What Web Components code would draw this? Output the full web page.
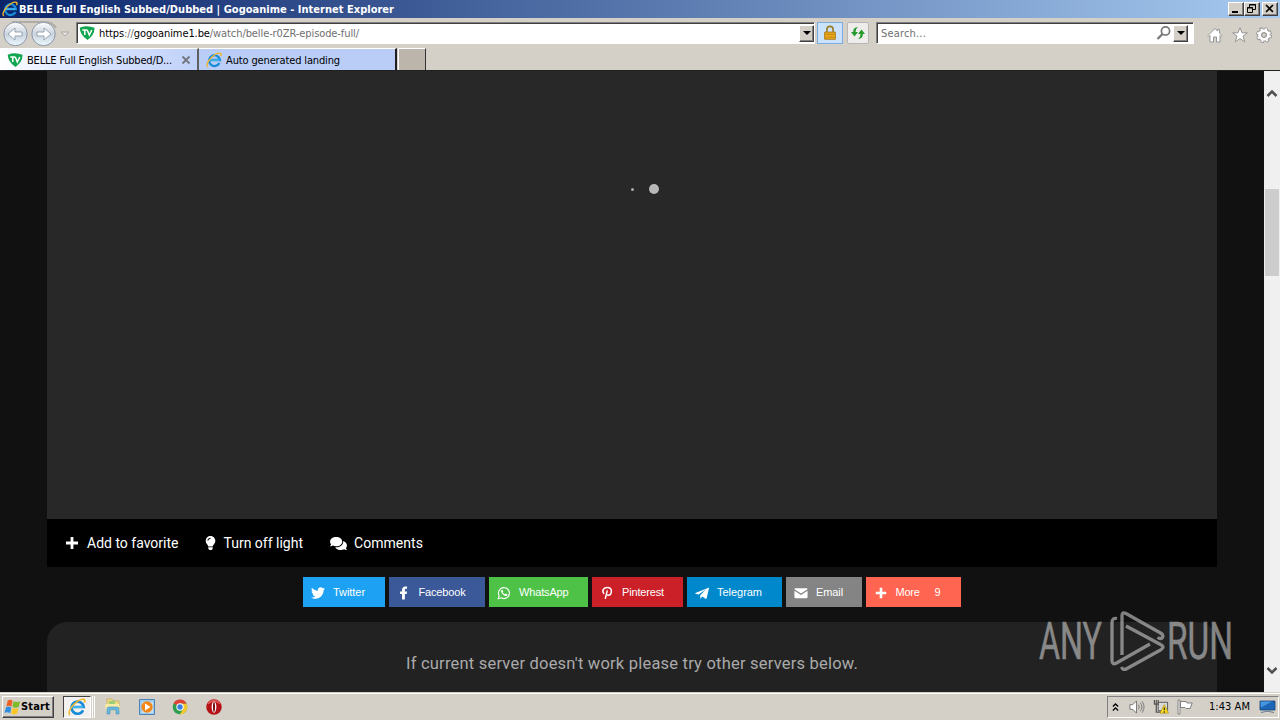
<!DOCTYPE html>
<html lang="en">
<head>
<meta charset="utf-8">
<title>BELLE Full English Subbed/Dubbed | Gogoanime</title>
<style>
	html, body {
		margin: 0;
		height: 720px;
		overflow: hidden;
	}
	body {
		display: flex;
		flex-direction: column;
		font: 11px/14px "DejaVu Sans Condensed", "DejaVu Sans", sans-serif;
		font-stretch: condensed;
		background: #d4d0c8;
		color: #000;
	}
</style>
</head>
<body>
<title-bar><fit-text w="375">BELLE Full English Subbed/Dubbed | Gogoanime - Internet Explorer</fit-text></title-bar>
<nav-bar></nav-bar>
<tab-strip>
	<browser-tab active icon="tv"><fit-text w="145">BELLE Full English Subbed/D...</fit-text></browser-tab>
	<browser-tab icon="ie"><fit-text w="114">Auto generated landing</fit-text></browser-tab>
</tab-strip>
<page-view>
	<video-player></video-player>
	<action-bar>
		<action-item icon="plus" style="width:140px"><fit-text w="91.500">Add to favorite</fit-text></action-item>
		<action-item icon="bulb" style="width:125px"><fit-text w="79.500">Turn off light</fit-text></action-item>
		<action-item icon="comments"><fit-text w="69">Comments</fit-text></action-item>
	</action-bar>
	<share-list>
		<share-button icon="twitter" style="width:82px;background:#1da1f2"><fit-text w="32">Twitter</fit-text></share-button>
		<share-button icon="facebook" style="width:96px;background:#3b5998"><fit-text w="47">Facebook</fit-text></share-button>
		<share-button icon="whatsapp" style="width:99px;background:#4dc247"><fit-text w="49.500">WhatsApp</fit-text></share-button>
		<share-button icon="pinterest" style="width:91px;background:#cb2027"><fit-text w="42">Pinterest</fit-text></share-button>
		<share-button icon="telegram" style="width:95px;background:#0088cc"><fit-text w="45">Telegram</fit-text></share-button>
		<share-button icon="mail" style="width:76px;background:#848484"><fit-text w="27">Email</fit-text></share-button>
		<share-button icon="more" style="width:95px;background:#ff6550"><fit-text w="24">More</fit-text><span slot="count">9</span></share-button>
	</share-list>
	<server-panel><fit-text w="452">If current server doesn't work please try other servers below.</fit-text></server-panel>
</page-view>
<task-bar><fit-text w="41">1:43 AM</fit-text></task-bar>
<water-mark></water-mark>

<script>
const icons = {
	ie: ['0 0 16 16', `<path d="M13.400 11A5.400 5.400 0 1 1 13.900 8H4.200" fill="none" stroke="#168bd8" stroke-width="2.300"/><path d="M4 8.100h9.500" stroke="#42b4ef" stroke-width="1.700"/><path d="M1.800 15C-.9 12.500 4 5.800 9 2.500c4-2.300 7.400-1.700 5.500 1.700" fill="none" stroke="#f0b62c" stroke-width="1.400"/>`],
	tv: ['0 0 16 16', `<path d="M.7 2.700Q8-.2 15.500 2.800Q15.800 10 8.500 15Q1 10 .7 2.700Z" fill="#13a650"/><path d="M3.300 5h5M5.800 5v5M8.300 5l2 5 2.500-5" fill="none" stroke="#fff" stroke-width="1.500"/>`],
	plus: ['0 0 14 14', '<path d="M7 1v12M1 7h12" stroke="#fff" stroke-width="2.800"/>'],
	bulb: ['0 0 352 512', '<path fill="#fff" d="M96 454.300c0 6.300 1.900 12.500 5.400 17.700l17.100 25.700A32 32 0 0 0 145 512h62a32 32 0 0 0 26.600-14.300l17-25.700a32 32 0 0 0 5.400-17.700V415H96v39.300ZM0 176c0 44.400 16.500 84.900 43.600 115.800 16.500 18.900 42.400 58.200 52.200 91.500h160.400c9.800-33.300 35.700-72.600 52.200-91.500A176 176 0 1 0 0 176Zm176-80c-44.100 0-80 35.900-80 80H64c0-61.800 50.200-112 112-112v32Z"/>'],
	comments: ['0 0 576 512', '<path fill="#fff" d="M416 192c0-88.400-93.100-160-208-160S0 103.600 0 192c0 34.300 14.100 65.900 38 92-13.400 30.200-35.500 54.200-35.800 54.500A8 8 0 0 0 8 352c36.600 0 66.900-12.300 88.700-25C129 343 167 352 208 352c114.900 0 208-71.600 208-160Zm122 220c23.900-26 38-57.700 38-92 0-66.900-53.500-124.200-129.300-148.100.9 6.600 1.300 13.300 1.300 20.100 0 105.900-107.700 192-240 192-10.800 0-21.300-.8-31.700-1.900C207.800 439.600 281.800 480 368 480c41 0 79-9.200 111.300-25 21.800 12.700 52.100 25 88.700 25a8 8 0 0 0 5.800-13.500c-.3-.3-22.400-24.200-35.800-54.500Z"/>'],
	twitter: ['0 0 512 512', '<path fill="#fff" d="M459 152c.3 4.500.3 9 .3 13.600C459.300 304 354 464 161 464 101 464 46 447 0 417c8 1 16 1.300 25 1.300 49 0 94-16.600 130-45-46-1-85-31-98-73 7 1 13 1.600 20 1.600 9 0 19-1.300 28-3.600C57 288 21 246 21 195v-1.300c14 8 30 13 47 13.600C40 189 21 157 21 120c0-20 5-37 14-53 52 64 130 105 217 110-2-8-3-16-3-24 0-58 47-105 105-105 30 0 58 13 77 33 24-5 46-13 67-25-8 24-24 45-46 58 21-2 41-8 60-16-14 21-32 39-53 54Z"/>'],
	facebook: ['0 0 32 32', '<path fill="#fff" d="M18 31h-6.500V18H7v-5.500h4.500V9C11.500 4 14.300 1 19 1c1.900 0 3.500.2 4 .3v5.200h-2.800C18.400 6.500 18 7.800 18 9.500v3h5l-.8 5.500H18v13Z"/>'],
	whatsapp: ['0 0 32 32', '<path d="m3 29 1.900-6.900A12.500 12.500 0 1 1 9.700 27L3 29Z" fill="none" stroke="#fff" stroke-width="2.600"/><path fill="#fff" d="M11.500 8.500c-1 .2-2.300 1.700-2.200 3.500.2 4 6.200 10.500 10.600 10.800 2.200.1 4-1.500 4-3.500 0-.5-3.200-2.200-4-2.300-.7 0-1.200 1.800-2 1.800-1.200 0-5-3.700-4.900-4.600.1-.6 1.400-1.300 1.300-2.100-.2-.8-1.500-3.500-2-3.600Z"/>'],
	pinterest: ['0 0 32 32', '<path d="M9.500 18C2.500 10 9 3.200 16.500 3.200c6.500 0 10 4 9.500 9-.5 6-4 9-7.500 8.800-2.200-.1-3.500-1.500-3.400-2.500M16.700 10 12 29.500" fill="none" stroke="#fff" stroke-width="3.400"/>'],
	telegram: ['0 0 32 32', '<path fill="#fff" d="M31 4 1 16c-1 .5-.8 1.400.2 1.700l7 2L25 8 12 21v8l5-5 7 5c1.300.8 2.300.2 2.600-1.200L32 5c.1-1-.3-1.300-1-1Z"/>'],
	mail: ['0 0 32 32', '<path fill="#fff" d="M3 5h26q2 0 2 2.500L16 17 1 7.500Q1 5 3 5Zm-2 6 15 9.500L31 11v14q0 3-3 3H4q-3 0-3-3Z"/>'],
	more: ['0 0 32 32', '<path d="M16 4v24M4 16h24" stroke="#fff" stroke-width="6"/>'],
	lock: ['0 0 16 18', '<path d="M4.500 8V5a3.500 3.500 0 0 1 7 0v3" fill="none" stroke="#9c7b25" stroke-width="1.800"/><path d="M2 8h12v8H2z" fill="#f0ac18" stroke="#a87310"/><path d="M3 10.500h10M3 13.500h10" stroke="#ba8116"/>'],
	refresh: ['0 0 16 16', '<path d="M1 7l3.500 4.500L8 7H5.500Q5.200 4 8 2 2.800 2.500 3.200 7Zm14 2L11.500 4.500 8 9h2.500q.3 3-2.500 5 5.200-.5 4.800-5Z" fill="#279b2d"/>'],
	search: ['0 0 16 16', '<circle cx="9.500" cy="6" r="4.100" fill="none" stroke="#777" stroke-width="1.700"/><path d="m6.500 9-5 5" stroke="#777" stroke-width="2.300"/>'],
	home: ['0 0 16 16', '<path d="M1 8.500 8 1.500l2.500 2.500V2.500h2V6L15 8.500l-1 1-1-1V15H9.500v-5h-3v5H3V8.500l-1 1Z" fill="#fff" stroke="#8c8c8c" stroke-width=".9"/>'],
	star: ['0 0 16 16', '<path d="m8 .8 2 5h5.300L11 9.200l1.700 5.600L8 11.500l-4.700 3.300L5 9.200.7 5.800H6Z" fill="#fff" stroke="#8c8c8c" stroke-width=".9"/>'],
	gear: ['0 0 16 16', '<circle cx="8" cy="8" r="6.400" fill="none" stroke="#8c8c8c" stroke-width="3" stroke-dasharray="2.900 2.127"/><circle cx="8" cy="8" r="4.300" fill="none" stroke="#8c8c8c" stroke-width="4.600"/><circle cx="8" cy="8" r="6.100" fill="none" stroke="#fff" stroke-width="2" stroke-dasharray="1.900 2.891" stroke-dashoffset="-.5"/><circle cx="8" cy="8" r="4.300" fill="none" stroke="#fff" stroke-width="3"/><circle cx="8" cy="8" r="2.300" fill="#d4d0c8" stroke="#8c8c8c" stroke-width=".8"/>'],
	close: ['0 0 10 10', '<path d="m1.500 1.500 7 7m0-7-7 7" stroke="#73777f" stroke-width="1.800"/>'],
	windows: ['0 0 18 16', '<path d="M4 1q3-1.500 5 .3L8 7.500Q5.500 6 2.500 7.200Z" fill="#ef6024"/><path d="M10 1.800q2.500 1.500 7 .2l-1.500 6Q12 9.500 9 8Z" fill="#7dbb28"/><path d="M2.200 8.200q3-1.300 5.500.2L6.500 14.500Q4 13 .5 14.200Z" fill="#2f8fe0"/><path d="M8.700 9q2.500 1.500 6.600.2l-1.500 6q-3.800 1.300-6.300-.2Z" fill="#fcc626"/>'],
	folder: ['0 0 18 18', '<path d="M3 1h5l1 2h6v8H3Z" fill="#eedb85" stroke="#c6a94c" stroke-width=".7"/><path d="M5 3h6v4H5z" fill="#9cce78"/><path d="M1 6h14l1 7H2Z" fill="#f7eaa5"/><path d="M3 16v-5q0-2 2-2h8q2 0 2 2v5h-3v-4H6v4Z" fill="#68b8df" stroke="#438fb9" stroke-width=".6"/>'],
	player: ['0 0 18 18', '<path d="M1.500 1.500h15v15h-15z" fill="#9fcbe9" stroke="#4783b8"/><path d="M4 4h11v11H4z" fill="#c8e1f2"/><circle cx="9" cy="9" r="5.700" fill="#f38718"/><path d="m7 5.500 5.500 3.500L7 12.500Z" fill="#fff"/>'],
	chrome: ['0 0 16 16', '<circle cx="8" cy="8" r="6.500" fill="#2f9e4f"/><path d="M8 8 2.300 4.700A6.500 6.500 0 0 1 13.800 5H8Z" fill="#e04235"/><path d="M8 5h5.800A6.500 6.500 0 0 1 8 14.500L11 9Z" fill="#f7c92d"/><circle cx="8" cy="8" r="3.300" fill="#fff"/><circle cx="8" cy="8" r="2.400" fill="#3b7fe0"/>'],
	opera: ['0 0 16 16', '<circle cx="8" cy="8" r="6.900" fill="#b51218"/><path d="M2.500 5Q8 0 13.500 5" fill="none" stroke="#dd5755" stroke-width="1.600"/><ellipse cx="8" cy="8" rx="2.100" ry="5" fill="#fff"/><ellipse cx="8" cy="8" rx=".9" ry="4.400" fill="#731013"/>'],
	chevrons: ['0 0 8 10', '<path d="m1 4.500 3-3 3 3M1 9l3-3 3 3" fill="none" stroke="#000" stroke-width="1.500"/>'],
	sound: ['0 0 17 16', '<path d="M1 5.500h3l4-4v13l-4-4H1Z" fill="#fff" stroke="#666" stroke-width=".9"/><path d="M10 5.500q2 2.500 0 5M12 3.500q3.500 4.500 0 9M14 2q4 6 0 12" fill="none" stroke="#777" stroke-width="1"/>'],
	network: ['0 0 17 17', '<path d="M5.500 3.500h10v9h-10z" fill="#d9d9d9" stroke="#555"/><path d="M1.500 1v4.500h4V1M3.500 1v13h5" fill="none" stroke="#555" stroke-width="1.300"/><path d="m12 6 4.500 9h-9Z" fill="#ffdf22" stroke="#b18b08" stroke-width=".7"/><path d="M12 9v3m0 1v1.500" stroke="#222" stroke-width="1.200"/>'],
	flag: ['0 0 16 16', '<path d="M1 1h2v14H1z" fill="#eee" stroke="#666" stroke-width=".7"/><path d="M3.500 2.500H9L10 4h5.200l-2 5.500H9L8 8.500H3.500Z" fill="#fff" stroke="#666" stroke-width=".8"/>'],
	desktop: ['0 0 17 14', '<path d="M1 1.500h15v9H1z" fill="#1c65b8" stroke="#17426e" stroke-width=".8"/><path d="M1.500 2H13L2 8Z" fill="#4698df"/><path d="M2 13q6-2.500 13 0" fill="#ddd" stroke="#657b91"/>']
}

// markup goes into the shadow root once, on creation
function define(name, html, ready) {
	customElements.define(name, class extends HTMLElement {
		connectedCallback() {
			if(this.shadowRoot) return
			const shadow = this.attachShadow({ mode: 'open' })
			shadow.innerHTML = typeof html === 'function' ? html(this) : html
			if(ready) ready(this, shadow)
		}
	})
}

define('ui-icon', $host => {
	const [box, shapes] = icons[$host.getAttribute('name')]
	return `
	<style>
		:host { display: block; flex: none; width: 16px; height: 16px; }
		svg { display: block; width: 100%; height: 100%; }
	</style>
	<svg viewBox="${box}">${shapes}</svg>`
})

define('title-bar', `
	<style>
		:host { display: flex; box-sizing: border-box; height: 18px; flex: none; align-items: center; padding: 0 2px; background: linear-gradient(90deg, #0a246a, #a6caf0); color: #fff; font-weight: bold; }
		.title { flex: 1; padding: 1px 0 0 1px; }
		button { width: 16px; height: 14px; padding: 0; border: 1px solid; border-color: #fff #404040 #404040 #fff; background: #d4d0c8; box-shadow: inset -1px -1px #808080; }
		button:last-child { margin-left: 2px; }
		svg { display: block; width: 14px; height: 12px; }
	</style>
	<ui-icon name="ie"></ui-icon>
	<div class="title"><slot></slot></div>
	<button><svg><path d="M3 8h6v2H3z"/></svg></button>
	<button><svg fill="none" stroke="#000"><path d="M4.500 4V1.500h6v5H8M4 2h7M2.500 4.500h5v5h-5zM2 5h6"/></svg></button>
	<button><svg stroke="#000" stroke-width="1.700"><path d="m3 2 7 7m0-7-7 7"/></svg></button>`)

define('drop-button', `
	<style>
		:host { display: flex; box-sizing: border-box; width: 15px; height: 17px; flex: none; align-items: center; justify-content: center; background: #d4d0c8; border: 1px solid; border-color: #fff #404040 #404040 #fff; box-shadow: inset -1px -1px #808080; }
		i { border: 4px solid transparent; border-top-color: #000; border-bottom: 0; }
	</style><i></i>`)

define('nav-bar', `
	<style>
		:host { display: flex; box-sizing: border-box; height: 30px; flex: none; padding: 4px 8px 4px 2px; }
		.back { width: 69px; height: 27px; flex: none; margin-top: -2px; }
		.field { display: flex; box-sizing: border-box; height: 22px; align-items: center; background: #fff; border: 1px solid; border-color: #808080 #fff #fff #808080; box-shadow: inset 1px 1px #404040; }
		.address { width: 739px; margin-left: 5px; padding-left: 2px; }
		.address fit-text { margin-left: 4px; }
		.address b { font-weight: normal; color: #000; }
		.address fit-text, .search fit-text { padding-top: 2px; color: #707070; }
		drop-button { margin-left: auto; }
		.tool { display: flex; box-sizing: border-box; width: 26px; height: 22px; align-items: center; justify-content: center; border: 1px solid #7dadde; background: #cbe2fc; margin-left: 2px; }
		.refresh { width: 22px; margin-left: 4px; border-color: #b8b6b2; background: #eeedeb; border-radius: 2px; }
		.search { width: 318px; margin-left: 7px; padding: 0 5px 0 4px; }
		.search ui-icon { margin-left: auto; }
		.search drop-button { margin-left: 1px; }
		.tools { display: flex; gap: 8.500px; padding: 5px 0 0 13px; }
	</style>
	<svg class="back" viewBox="0 0 69 27">
		<defs><linearGradient id="g" x2="0" y2="1"><stop stop-color="#fff"/><stop offset=".5" stop-color="#c9d2dd"/><stop offset="1" stop-color="#edf8ff"/></linearGradient></defs>
		<path d="M10 2h34q6 0 10 6" fill="none" stroke="#b1aca5" stroke-width="2"/>
		<g fill="url(#g)" stroke="#8c98a7"><circle cx="13.500" cy="14" r="11.700"/><circle cx="41.500" cy="14" r="11.700"/></g>
		<g fill="#fff" stroke="#8d9bad" stroke-width=".9"><path d="m6 14 7-6v4h7v4h-7v4Z"/><path d="m49 14-7-6v4h-7v4h7v4Z"/></g>
		<path d="M59 12h8l-4 4Z" fill="#e6e3de" stroke="#aaa"/>
	</svg>
	<div class="field address"><ui-icon name="tv"></ui-icon><fit-text w="260"><b>https</b>://<b>gogoanime1.be</b>/watch/belle-r0ZR-episode-full/</fit-text><drop-button></drop-button></div>
	<div class="tool"><ui-icon name="lock"></ui-icon></div>
	<div class="tool refresh"><ui-icon name="refresh"></ui-icon></div>
	<div class="field search"><fit-text w="45">Search...</fit-text><ui-icon name="search"></ui-icon><drop-button></drop-button></div>
	<div class="tools"><ui-icon name="home"></ui-icon><ui-icon name="star"></ui-icon><ui-icon name="gear"></ui-icon></div>`)

define('tab-strip', `
	<style>
		:host { display: flex; box-sizing: border-box; height: 23px; flex: none; border-bottom: 1px solid #202020; }
		.new { box-sizing: border-box; width: 28px; border-right: 1px solid #333; border-top: 1px solid #fff; border-left: 1px solid #fff; background: #bbb5ac; margin-left: 1px; }
	</style>
	<slot></slot><div class="new"></div>`)

define('browser-tab', $host => `
	<style>
		:host { display: flex; box-sizing: border-box; width: 198px; height: 22px; align-items: center; padding: 1px 6px 0 7px; background: #bacdf7; border-top: 1px solid #fff; border-right: 2px solid #202020; }
		:host([active]) { background: linear-gradient(90deg, #fff, #e5edff 25%, #c0d1f9); width: 199px; border-right-color: #606060; }
		slot { display: block; margin: 1px 0 0 4px; }
		.close { width: 10px; height: 10px; margin-left: auto; }
	</style>
	<ui-icon name="${$host.getAttribute('icon')}"></ui-icon><slot></slot>
	${$host.hasAttribute('active') ? '<ui-icon class="close" name="close"></ui-icon>' : ''}`)

define('page-view', `
	<style>
		:host { display: flex; height: 621px; flex: none; background: #111; overflow: hidden; }
		main { flex: 1; padding: 0 47px; }
		aside { display: flex; box-sizing: border-box; width: 16px; padding: 17px 1px 16px; background: #f0f0f0; flex-direction: column; align-items: center; }
		svg { width: 12px; height: 10px; flex: none; }
		.thumb { width: 14px; height: 87px; margin-top: 91px; background: #cdcdcd; }
		.down { margin-top: auto; }
	</style>
	<main><slot></slot></main>
	<aside>
		<svg><path d="m1.500 8 4.500-4.500L10.500 8" fill="none" stroke="#505050" stroke-width="2.500"/></svg>
		<div class="thumb"></div>
		<svg class="down"><path d="m1.500 2 4.500 4.500L10.500 2" fill="none" stroke="#505050" stroke-width="2.500"/></svg>
	</aside>`)

define('video-player', `
	<style>
		:host { display: block; height: 448px; background: #282828; }
		.dots { display: flex; align-items: center; gap: 15px; padding: 113px 0 0 584px; }
		i { width: 3px; height: 3px; border-radius: 50%; background: #aaa; }
		i + i { width: 10px; height: 10px; background: #b8b8b8; }
	</style>
	<div class="dots"><i></i><i></i></div>`)

define('action-bar', `
	<style>
		:host { display: flex; box-sizing: border-box; height: 48px; align-items: center; padding-left: 18px; background: #000; color: #fff; font: 14px/20px Roboto, sans-serif; }
	</style><slot></slot>`)

define('action-item', $host => `
	<style>
		:host { display: flex; flex: none; align-items: center; }
		ui-icon { height: 14px; width: 14px; margin-right: 8px; }
		[name=bulb] { width: 11px; margin-right: 7.500px; }
		[name=comments] { width: 17px; height: 15px; margin-right: 7px; }
	</style>
	<ui-icon name="${$host.getAttribute('icon')}"></ui-icon><slot></slot>`)

define('share-list', `
	<style>
		:host { display: flex; justify-content: center; gap: 4px; padding: 10px 0 15px; color: #fff; font: 11px/14px "Liberation Sans", Arial, sans-serif; }
	</style><slot></slot>`)

define('share-button', $host => `
	<style>
		:host { display: flex; box-sizing: border-box; height: 30px; align-items: center; padding-left: 8px; }
		ui-icon { width: 14px; height: 14px; margin: 1px 8px 0 0; }
		[name=more], [name=facebook] { margin-right: 7.500px; }
		slot[name=count] { display: block; margin-left: 15px; }
	</style>
	<ui-icon name="${$host.getAttribute('icon')}"></ui-icon><slot></slot><slot name="count"></slot>`)

define('server-panel', `
	<style>
		:host { display: flex; box-sizing: border-box; height: 90px; justify-content: center; padding-top: 31px; border-radius: 20px; background: #222; color: #aaa; font: 16.500px/21px Roboto, sans-serif; }
	</style><slot></slot>`)

define('task-bar', `
	<style>
		:host { display: flex; box-sizing: border-box; height: 28px; flex: none; align-items: center; padding: 2px 1px 2px 2px; border-top: 1px solid #d4d0c8; box-shadow: inset 0 1px #fff; }
		.start { display: flex; box-sizing: border-box; width: 52px; height: 22px; align-items: center; padding-left: 1px; font-weight: bold; border: 1px solid; border-color: #fff #404040 #404040 #fff; box-shadow: inset -1px -1px #808080; }
		.start ui-icon { width: 17px; }
		.app { display: flex; box-sizing: border-box; width: 28px; height: 22px; margin-left: 9px; align-items: center; justify-content: center; border: 1px solid; border-color: #404040 #fff #fff #404040; background: #f2f1ef; }
		.app ui-icon { width: 18px; height: 18px; }
		.edge { width: 1px; height: 22px; margin-left: 1px; border-left: 1px solid #fff; border-right: 1px solid #fff; }
		.apps { display: flex; gap: 15.700px; margin-left: 9px; }
		.apps ui-icon { width: 18px; height: 18px; }
		.tray { display: flex; box-sizing: border-box; width: 172px; height: 22px; margin-left: auto; align-items: center; padding-left: 4px; border: 1px solid; border-color: #808080 #fff #fff #808080; }
		.tray ui-icon { margin-right: 8px; }
		.tray .chev { width: 7px; height: 10px; margin-right: 10px; }
		.tray slot { display: block; margin-left: 8px; }
		.tray .desk { width: 17px; height: 15px; margin: 0 2px 0 auto; }
	</style>
	<div class="start"><ui-icon name="windows"></ui-icon><fit-text w="29">Start</fit-text></div>
	<div class="app"><ui-icon name="ie"></ui-icon></div><div class="edge"></div>
	<div class="apps"><ui-icon name="folder"></ui-icon><ui-icon name="player"></ui-icon><ui-icon name="chrome"></ui-icon><ui-icon name="opera"></ui-icon></div>
	<div class="tray"><ui-icon class="chev" name="chevrons"></ui-icon><ui-icon name="sound"></ui-icon><ui-icon name="network"></ui-icon><ui-icon name="flag"></ui-icon><slot></slot><ui-icon class="desk" name="desktop"></ui-icon></div>`)

define('water-mark', `
	<style>
		:host { position: absolute; left: 1036px; top: 606px; width: 220px; height: 80px; opacity: .55; pointer-events: none; }
		text { font: 400 52px Roboto, sans-serif; fill: #ddd; stroke: #ddd; stroke-width: .5px; }
	</style>
	<svg width="220" height="80">
		<text x="3" y="53" textLength="63" lengthAdjust="spacingAndGlyphs">ANY</text>
		<text x="131" y="53" textLength="66" lengthAdjust="spacingAndGlyphs">RUN</text>
		<g fill="none" stroke="#ddd" stroke-width="3.300" stroke-linejoin="round">
			<path d="M81 12.500q-5-1-5 4v38q0 5 4.500 2.500L114 38"/>
			<path d="M86 49V9.500q0-4 4-2l34.500 19.500q3.500 2 2 4.500-2 2-5 0"/>
			<path d="m90 20 34.500 18.500q5 2.500 0 5.500L91 62.500q-4 2.500-5.500-1.500"/>
		</g>
	</svg>`)

// spreads letters so that the label takes the given width
// defined last: the parents must have set their fonts before it measures
define('fit-text', `
	<style>
		:host { display: block; flex: none; }
		span { display: inline-block; white-space: pre; vertical-align: top; }
	</style>
	<span><slot></slot></span>`, ($host, shadow) => {
	const $span = shadow.querySelector('span')
	const width = Number($host.getAttribute('w'))
	const natural = $span.getBoundingClientRect().width
	$span.style.letterSpacing = (width - natural) / $host.textContent.length + 'px'
	$host.style.width = width + 'px'
})
</script>
</body>
</html>
